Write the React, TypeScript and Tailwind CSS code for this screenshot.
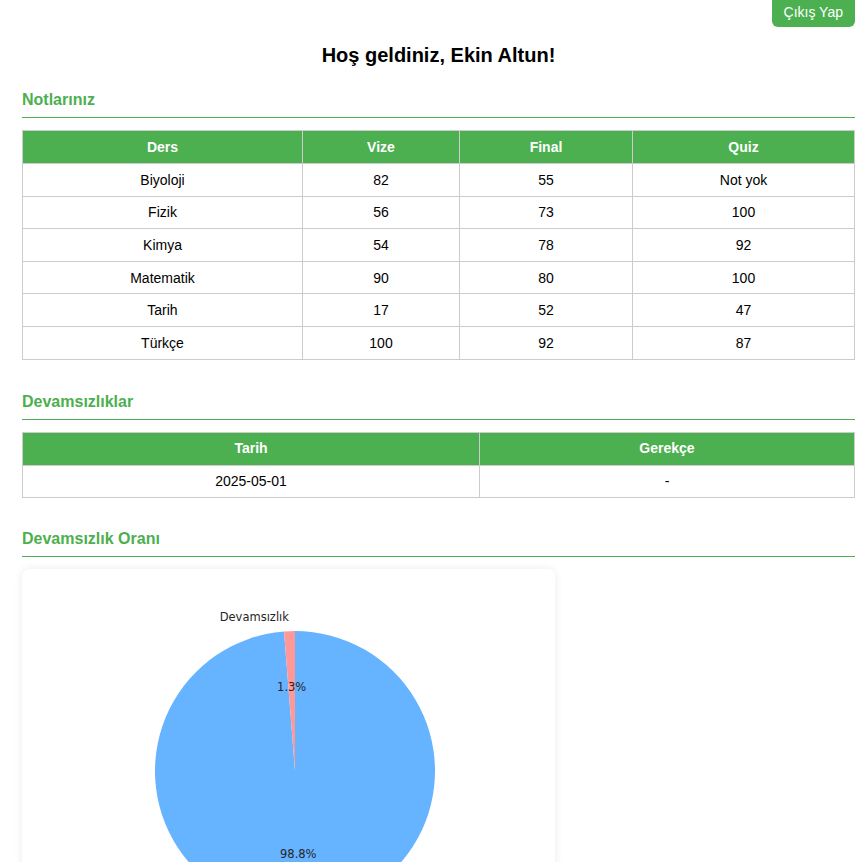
const grades = [
  { ders: "Biyoloji", vize: "82", final: "55", quiz: "Not yok" },
  { ders: "Fizik", vize: "56", final: "73", quiz: "100" },
  { ders: "Kimya", vize: "54", final: "78", quiz: "92" },
  { ders: "Matematik", vize: "90", final: "80", quiz: "100" },
  { ders: "Tarih", vize: "17", final: "52", quiz: "47" },
  { ders: "Türkçe", vize: "100", final: "92", quiz: "87" },
];

const absences = [{ tarih: "2025-05-01", gerekce: "-" }];

function SectionTitle({ children }: { children: React.ReactNode }) {
  return (
    <h2 className="border-b border-[#4CAF50] pb-[7px] text-[16px] leading-[20px] font-bold text-[#4CAF50]">
      {children}
    </h2>
  );
}

const th = "border border-[#ccc] bg-[#4CAF50] h-[33px] text-center font-bold text-white";
const td = "border border-[#ccc] h-[32.6px] pt-px text-center text-black";

function PieChart() {
  // matplotlib style pie: startangle 90, counter-clockwise
  const cx = 273;
  const cy = 202;
  const r = 140;
  const pct = 0.0125;
  const a0 = Math.PI / 2;
  const a1 = a0 + pct * 2 * Math.PI;
  const p = (a: number, k = 1) => [cx + Math.cos(a) * r * k, cy - Math.sin(a) * r * k];
  const [x0, y0] = p(a0);
  const [x1, y1] = p(a1);
  const mid1 = (a0 + a1) / 2;
  const mid2 = a1 + (2 * Math.PI - (a1 - a0)) / 2;
  const [lx, ly] = p(mid1, 1.1);
  const [px1, py1] = p(mid1, 0.6);
  const [px2, py2] = p(mid2, 0.6);
  return (
    <svg width="533" height="360" viewBox="0 0 533 360" className="block">
      <path d={`M${cx},${cy} L${x1},${y1} A${r},${r} 0 1 0 ${x0},${y0} Z`} fill="#66b3ff" />
      <path d={`M${cx},${cy} L${x0},${y0} A${r},${r} 0 0 0 ${x1},${y1} Z`} fill="#ff9999" />
      <g fontFamily="'DejaVu Sans', sans-serif" fontSize="11.5" fill="#262626">
        <text x={lx} y={ly} textAnchor="end" dominantBaseline="middle">Devamsızlık</text>
        <text x={px1} y={py1} textAnchor="middle" dominantBaseline="middle">1.3%</text>
        <text x={px2} y={py2} textAnchor="middle" dominantBaseline="middle">98.8%</text>
      </g>
    </svg>
  );
}

export default function App() {
  return (
    <div className="min-h-screen bg-white pl-[22px] pr-[10px] font-['Liberation_Sans',Arial,sans-serif] text-[14px] text-black">
      <div className="flex justify-end">
        <button className="-mt-[9px] h-[36px] rounded-md bg-[#4CAF50] px-[12px] pt-[7px] text-[14px] text-white">
          Çıkış Yap
        </button>
      </div>

      <h1 className="mt-4 text-center text-[20px] leading-[24px] font-bold">Hoş geldiniz, Ekin Altun!</h1>

      <div className="mt-[23px]">
        <SectionTitle>Notlarınız</SectionTitle>
        <table className="mt-3 w-full table-fixed border-collapse">
          <colgroup>
            <col className="w-[280px]" />
            <col className="w-[157px]" />
            <col className="w-[173px]" />
            <col />
          </colgroup>
          <thead>
            <tr>
              <th className={th}>Ders</th>
              <th className={th}>Vize</th>
              <th className={th}>Final</th>
              <th className={th}>Quiz</th>
            </tr>
          </thead>
          <tbody>
            {grades.map((g) => (
              <tr key={g.ders}>
                <td className={td}>{g.ders}</td>
                <td className={td}>{g.vize}</td>
                <td className={td}>{g.final}</td>
                <td className={td}>{g.quiz}</td>
              </tr>
            ))}
          </tbody>
        </table>
      </div>

      <div className="mt-[32px]">
        <SectionTitle>Devamsızlıklar</SectionTitle>
        <table className="mt-3 w-full table-fixed border-collapse">
          <colgroup>
            <col className="w-[457px]" />
            <col />
          </colgroup>
          <thead>
            <tr>
              <th className={th}>Tarih</th>
              <th className={th}>Gerekçe</th>
            </tr>
          </thead>
          <tbody>
            {absences.map((a) => (
              <tr key={a.tarih}>
                <td className={td}>{a.tarih}</td>
                <td className={td}>{a.gerekce}</td>
              </tr>
            ))}
          </tbody>
        </table>
      </div>

      <div className="mt-[31px]">
        <SectionTitle>Devamsızlık Oranı</SectionTitle>
        <div className="mt-3 w-[533px] rounded-lg bg-white shadow-[0_0_10px_rgba(0,0,0,0.08)]">
          <PieChart />
        </div>
      </div>
    </div>
  );
}
